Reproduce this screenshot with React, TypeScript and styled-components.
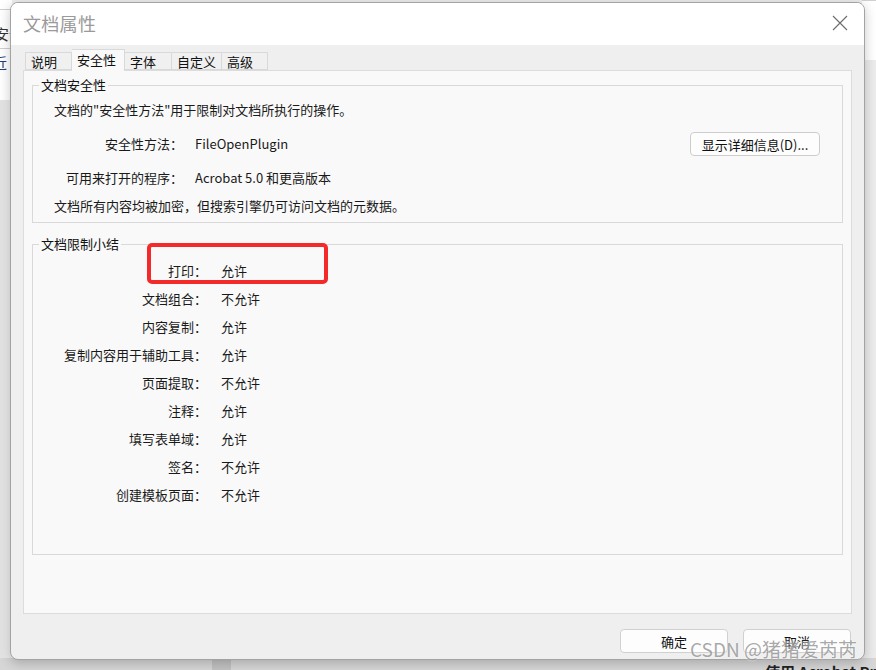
import React from 'react';
import styled, { createGlobalStyle } from 'styled-components';

const GlobalStyle = createGlobalStyle`
  html, body {
    margin: 0;
    padding: 0;
  }
  body {
    width: 876px;
    height: 670px;
    overflow: hidden;
    background: #d9d9d9;
    font-family: "Noto Sans CJK SC", "Noto Sans", sans-serif;
    color: #1a1a1a;
  }
`;

type Row = { label: string; value: string };

const limits: Row[] = [
  { label: '打印：', value: '允许' },
  { label: '文档组合：', value: '不允许' },
  { label: '内容复制：', value: '允许' },
  { label: '复制内容用于辅助工具：', value: '允许' },
  { label: '页面提取：', value: '不允许' },
  { label: '注释：', value: '允许' },
  { label: '填写表单域：', value: '允许' },
  { label: '签名：', value: '不允许' },
  { label: '创建模板页面：', value: '不允许' },
];

const tabs = [
  { name: '说明', width: 47 },
  { name: '安全性', width: 53, active: true },
  { name: '字体', width: 47 },
  { name: '自定义', width: 50 },
  { name: '高级', width: 46 },
];

export default function App() {
  return (
    <>
      <GlobalStyle />
      <Page>
        <Backdrop>
          <BackTopLeft>
            <BackText>安全</BackText>
            <BackLink>近</BackLink>
          </BackTopLeft>
          <BackTopRight />
          <BackBottom>
            <BackBlock />
            <BackBold>使用 Acrobat Pro DC</BackBold>
          </BackBottom>
        </Backdrop>

        <Dialog>
          <TitleBar>
            <Title>文档属性</Title>
            <CloseButton>
              <svg width="16" height="16" viewBox="0 0 16 16">
                <path d="M1 1 L15 15 M15 1 L1 15" stroke="#6b6b6b" strokeWidth="1.1" fill="none" />
              </svg>
            </CloseButton>
          </TitleBar>

          <Body>
            <TabRow>
              {tabs.map((t) => (
                <Tab key={t.name} $active={!!t.active} $width={t.width}>
                  {t.name}
                </Tab>
              ))}
            </TabRow>

            <Panel>
              <Group>
                <Legend>文档安全性</Legend>
                <SecurityBody>
                  <Line>文档的"安全性方法"用于限制对文档所执行的操作。</Line>
                  <InfoRow>
                    <InfoLabel>安全性方法：</InfoLabel>
                    <InfoValue>FileOpenPlugin</InfoValue>
                    <DetailButton>显示详细信息(D)...</DetailButton>
                  </InfoRow>
                  <InfoRow>
                    <InfoLabel>可用来打开的程序：</InfoLabel>
                    <InfoValue>Acrobat 5.0 和更高版本</InfoValue>
                  </InfoRow>
                  <Line>文档所有内容均被加密，但搜索引擎仍可访问文档的元数据。</Line>
                </SecurityBody>
              </Group>

              <SummaryGroup>
                <Legend>文档限制小结</Legend>
                <SummaryBody>
                  {limits.map((r) => (
                    <LimitRow key={r.label}>
                      <LimitLabel>{r.label}</LimitLabel>
                      <span>{r.value}</span>
                    </LimitRow>
                  ))}
                </SummaryBody>
              </SummaryGroup>
            </Panel>

            <Footer>
              <DialogButton>确定</DialogButton>
              <DialogButton>取消</DialogButton>
            </Footer>
          </Body>
        </Dialog>

        <Highlight />
        <Watermark>CSDN @猪猪爱芮芮</Watermark>
      </Page>
    </>
  );
}

const Page = styled.div`
  position: relative;
  width: 876px;
  height: 670px;
  padding: 2px 0 0 10px;
  box-sizing: border-box;
  overflow: hidden;
`;

const Backdrop = styled.div`
  position: absolute;
  inset: 0;
  background: linear-gradient(90deg, #e2e2e2 0px, #ececec 10px);
`;

const BackTopLeft = styled.div`
  position: absolute;
  left: 0;
  top: 0;
  width: 12px;
  height: 100px;
  background: #fff;
  overflow: hidden;
  font-size: 15px;
`;

const BackText = styled.div`
  position: absolute;
  left: -6px;
  top: 9px;
  width: 40px;
  color: #333;
  border-top: 1px solid #cfcfcf;
  border-bottom: 1px solid #cfcfcf;
  padding: 13px 0 4px;
`;

const BackLink = styled.div`
  position: absolute;
  left: -8px;
  top: 52px;
  color: #1f3f7a;
`;

const BackTopRight = styled.div`
  position: absolute;
  right: 0;
  top: 0;
  width: 14px;
  height: 60px;
  background: #fff;
  box-shadow: inset 0 13px 0 -12px #d0d0d0, inset 0 48px 0 -47px #d0d0d0;
`;

const BackBottom = styled.div`
  position: absolute;
  left: 0;
  right: 0;
  bottom: 0;
  height: 12px;
  background: #d6d6d6;
`;

const BackBlock = styled.div`
  position: absolute;
  left: 212px;
  top: 0;
  width: 19px;
  height: 12px;
  background: #c2c2c2;
`;

const BackBold = styled.div`
  position: absolute;
  left: 765px;
  top: 3px;
  font-size: 15px;
  font-weight: 700;
  color: #222;
  white-space: nowrap;
`;

const Dialog = styled.div`
  position: relative;
  width: 855px;
  height: 658px;
  box-sizing: border-box;
  display: flex;
  flex-direction: column;
  background: #efefef;
  border: 1px solid #a3a3a3;
  border-radius: 8px;
  overflow: hidden;
  box-shadow: 0 3px 12px rgba(0, 0, 0, 0.22);
`;

const TitleBar = styled.div`
  height: 42px;
  flex: none;
  display: flex;
  align-items: center;
  justify-content: space-between;
  padding: 0 16px 3px 12px;
  box-sizing: border-box;
  background: #fff;
`;

const Title = styled.div`
  font-size: 18px;
  color: #9a9a9a;
  letter-spacing: 0.3px;
`;

const CloseButton = styled.div`
  width: 16px;
  height: 16px;
  display: flex;
`;

const Body = styled.div`
  flex: 1;
  display: flex;
  flex-direction: column;
  padding: 4px 12px 0 12px;
`;

const TabRow = styled.div`
  height: 21px;
  display: flex;
  align-items: flex-end;
  padding-left: 2px;
  position: relative;
  z-index: 1;
`;

const Tab = styled.div<{ $active: boolean; $width: number }>`
  width: ${(p) => p.$width}px;
  height: ${(p) => (p.$active ? 22 : 18)}px;
  box-sizing: border-box;
  margin-bottom: ${(p) => (p.$active ? -1 : 0)}px;
  padding: ${(p) => (p.$active ? '1px 0 0 5px' : '0 0 0 5px')};
  font-size: 13px;
  line-height: 17px;
  color: #111;
  background: ${(p) => (p.$active ? '#f9f9f9' : '#f0f0f0')};
  border: 1px solid #d9d9d9;
  border-bottom: ${(p) => (p.$active ? 'none' : '1px solid #d9d9d9')};
  & + & {
    border-left: none;
  }
`;

const Panel = styled.div`
  height: 544px;
  box-sizing: border-box;
  display: flex;
  flex-direction: column;
  padding: 5px 8px 0 8px;
  background: #f9f9f9;
  border: 1px solid #dcdcdc;
`;

const Group = styled.fieldset`
  margin: 0;
  padding: 0;
  min-width: 0;
  border: 1px solid #d9d9d9;
`;

const SummaryGroup = styled(Group)`
  margin-top: 12px;
`;

const Legend = styled.legend`
  margin-left: 6px;
  padding: 0 2px;
  font-size: 13px;
  line-height: 18px;
  color: #111;
`;

const SecurityBody = styled.div`
  display: flex;
  flex-direction: column;
  padding: 7px 22px 7px 21px;
  font-size: 13px;
  line-height: 18px;
`;

const Line = styled.div`
  height: 18px;
`;

const InfoRow = styled.div`
  display: grid;
  grid-template-columns: 129px 1fr auto;
  column-gap: 12px;
  align-items: center;
  min-height: 18px;
  margin-top: 13px;
  & + ${Line} {
    margin-top: 10px;
  }
`;

const InfoLabel = styled.span`
  text-align: right;
`;

const InfoValue = styled.span``;

const DetailButton = styled.button`
  width: 130px;
  height: 24px;
  padding: 0;
  font-family: inherit;
  font-size: 13px;
  color: #111;
  background: #fdfdfd;
  border: 1px solid #cdcdcd;
  border-radius: 4px;
`;

const SummaryBody = styled.div`
  padding: 3px 0 46px 21px;
  font-size: 13px;
`;

const LimitRow = styled.div`
  display: grid;
  grid-template-columns: 153px 1fr;
  column-gap: 14px;
  height: 28px;
  align-items: center;
`;

const LimitLabel = styled.span`
  text-align: right;
`;

const Footer = styled.div`
  display: flex;
  justify-content: flex-end;
  gap: 15px;
  padding: 15px 1px 0 0;
`;

const DialogButton = styled.button`
  width: 108px;
  height: 24px;
  padding: 0;
  font-family: inherit;
  font-size: 13px;
  color: #111;
  background: #fdfdfd;
  border: 1px solid #d0d0d0;
  border-radius: 4px;
`;

const Highlight = styled.div`
  position: absolute;
  left: 147px;
  top: 243px;
  width: 181px;
  height: 41px;
  box-sizing: border-box;
  border: 4px solid #f42a2a;
  border-radius: 5px;
`;

const Watermark = styled.div`
  position: absolute;
  left: 690px;
  top: 636px;
  font-size: 19px;
  line-height: 26px;
  color: rgba(110, 110, 110, 0.6);
  white-space: nowrap;
  text-shadow: 0 0 2px rgba(255, 255, 255, 0.9);
`;
